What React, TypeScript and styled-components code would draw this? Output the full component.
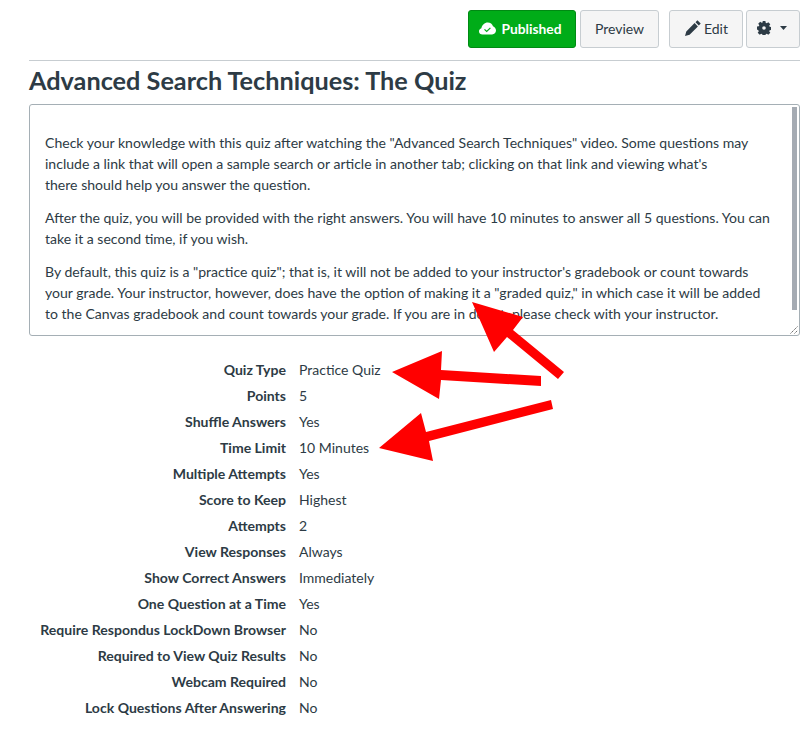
import React from 'react'
import styled, { createGlobalStyle } from 'styled-components'

const GlobalStyle = createGlobalStyle`
  html, body {
    margin: 0;
    padding: 0;
    background: #ffffff;
    font-family: Lato, "Liberation Sans", sans-serif;
    color: #2d3b45;
  }
`

const Page = styled.div`
  position: relative;
  width: 811px;
  height: 730px;
  overflow: hidden;
  box-sizing: border-box;
  padding: 10px 11px 0 29px;
`

const Toolbar = styled.div`
  display: flex;
  justify-content: flex-end;
  height: 38px;
  gap: 4px;
`

const Button = styled.div<{ $width: number; $spaced?: boolean }>`
  box-sizing: border-box;
  width: ${(p) => p.$width}px;
  margin-left: ${(p) => (p.$spaced ? 6 : 0)}px;
  padding-bottom: 2px;
  display: flex;
  align-items: center;
  justify-content: center;
  gap: 3px;
  border: 1px solid #c7cdd1;
  border-radius: 3px;
  background: #f5f5f5;
  color: #2d3b45;
  font-size: 14px;
`

const PublishedButton = styled(Button)`
  background: #00ac18;
  border-color: #008a13;
  color: #ffffff;
  font-weight: 700;
  font-size: 13.8px;
  gap: 5px;
  padding-right: 3px;
`

const EditButton = styled(Button)`
  padding-left: 1px;
`

const GearButton = styled(Button)`
  margin-left: -1px;
  gap: 9px;
  padding-right: 2px;
`

const Divider = styled.div`
  height: 1px;
  margin-top: 12px;
  background: #c7cdd1;
`

const Title = styled.h1`
  margin: 0;
  height: 43px;
  font-size: 25.25px;
  line-height: 39px;
  font-weight: 700;
  color: #2d3b45;
`

const DescriptionBox = styled.div`
  position: relative;
  box-sizing: border-box;
  height: 232px;
  padding: 27px 15px 0 15px;
  border: 1px solid #a5afb5;
  border-radius: 3px;
  overflow: hidden;
`

const Paragraph = styled.p`
  margin: 0 0 12px 0;
  font-size: 14.05px;
  line-height: 21px;
`

const ScrollThumb = styled.div`
  position: absolute;
  top: 2px;
  right: 2px;
  width: 5px;
  height: 203px;
  background: #a5abb3;
`

const ResizeHandle = styled.svg`
  position: absolute;
  right: 1px;
  bottom: 1px;
  width: 8px;
  height: 8px;
`

const Details = styled.div`
  display: grid;
  grid-template-columns: 257px 1fr;
  column-gap: 13px;
  margin-top: 21px;
`

const DetailLabel = styled.div`
  text-align: right;
  font-size: 14.05px;
  line-height: 26px;
  font-weight: 700;
`

const DetailValue = styled.div`
  font-size: 14px;
  line-height: 26px;
`

const ArrowLayer = styled.svg`
  position: absolute;
  top: 0;
  left: 0;
  width: 811px;
  height: 730px;
  pointer-events: none;
`

const details: [string, string][] = [
  ['Quiz Type', 'Practice Quiz'],
  ['Points', '5'],
  ['Shuffle Answers', 'Yes'],
  ['Time Limit', '10 Minutes'],
  ['Multiple Attempts', 'Yes'],
  ['Score to Keep', 'Highest'],
  ['Attempts', '2'],
  ['View Responses', 'Always'],
  ['Show Correct Answers', 'Immediately'],
  ['One Question at a Time', 'Yes'],
  ['Require Respondus LockDown Browser', 'No'],
  ['Required to View Quiz Results', 'No'],
  ['Webcam Required', 'No'],
  ['Lock Questions After Answering', 'No'],
]

const arrows = [
  '472,302 523,317 513,330 564,372 558,379 507,337 494,352',
  '392,372 442,351 441,370 541,376 541,386 441,380 439,399',
  '379,448 421,413 426,432 551,400 553,409 429,441 433,461',
]

const CloudCheck = () => (
  <svg width="17" height="13" viewBox="0 0 17 13">
    <path
      d="M3.500 12.500C1.500 12.500 0 11.200 0 9.400c0-1.500.9-2.700 2.400-3.100C3 3 5.600.5 8.800.5c2.600 0 4.500 1.500 5.200 3.800C15.800 5 17 6.700 17 8.600c0 2.300-1.700 3.900-3.900 3.900z"
      fill="#ffffff"
    />
    <path d="M5.500 7.300l2.200 2.200 3.700-3.700" fill="none" stroke="#00ac18" strokeWidth="1.200" />
  </svg>
)

const PencilIcon = () => (
  <svg width="16" height="16" viewBox="0 0 16 16">
    <path d="M12.400.300l3.300 3.300-1.900 1.900-3.300-3.300zM9.600 3.100l3.300 3.300-8.300 8.300L0 16l1.300-4.600z" fill="#2d3b45" />
  </svg>
)

const GearIcon = () => (
  <svg width="14" height="14" viewBox="0 0 14 14">
    <path
      fillRule="evenodd"
      d="M5.600 0h2.800l.3 1.800 1.100.5 1.500-1.100 2 2-1.100 1.500.5 1.100 1.800.3v2.800l-1.800.3-.5 1.100 1.100 1.500-2 2-1.500-1.100-1.100.5-.3 1.800H5.600l-.3-1.800-1.100-.5-1.500 1.100-2-2 1.100-1.500-.5-1.100L0 8.400V5.600l1.800-.3.500-1.100-1.100-1.500 2-2 1.500 1.100 1.100-.5zM7 5.200a1.800 1.800 0 1 0 0 3.600 1.800 1.800 0 0 0 0-3.600z"
      fill="#2d3b45"
    />
  </svg>
)

const Caret = () => (
  <svg width="7" height="4" viewBox="0 0 7 4">
    <path d="M0 0h7L3.500 4z" fill="#2d3b45" />
  </svg>
)

const App = () => (
  <Page>
    <GlobalStyle />
    <Toolbar>
      <PublishedButton $width={108}>
        <CloudCheck />
        Published
      </PublishedButton>
      <Button $width={79}>Preview</Button>
      <EditButton $width={74} $spaced>
        <PencilIcon />
        Edit
      </EditButton>
      <GearButton $width={54}>
        <GearIcon />
        <Caret />
      </GearButton>
    </Toolbar>
    <Divider />
    <Title>Advanced Search Techniques: The Quiz</Title>
    <DescriptionBox>
      <Paragraph>
        Check your knowledge with this quiz after watching the "Advanced Search Techniques" video. Some questions may
        <br />
        include a link that will open a sample search or article in another tab; clicking on that link and viewing what's
        <br />
        there should help you answer the question.
      </Paragraph>
      <Paragraph>
        After the quiz, you will be provided with the right answers. You will have 10 minutes to answer all 5 questions. You can
        <br />
        take it a second time, if you wish.
      </Paragraph>
      <Paragraph>
        By default, this quiz is a "practice quiz"; that is, it will not be added to your instructor's gradebook or count towards
        <br />
        your grade. Your instructor, however, does have the option of making it a "graded quiz," in which case it will be added
        <br />
        to the Canvas gradebook and count towards your grade. If you are in doubt, please check with your instructor.
      </Paragraph>
      <ScrollThumb />
      <ResizeHandle viewBox="0 0 8 8">
        <path d="M0.500 7.500L7.500 0.500M4.500 7.500L7.500 4.500" stroke="#666666" strokeWidth="1" strokeDasharray="1.500 0.700" fill="none" />
      </ResizeHandle>
    </DescriptionBox>
    <Details>
      {details.map(([label, value]) => (
        <React.Fragment key={label}>
          <DetailLabel>{label}</DetailLabel>
          <DetailValue>{value}</DetailValue>
        </React.Fragment>
      ))}
    </Details>
    <ArrowLayer viewBox="0 0 811 730">
      {arrows.map((points) => (
        <polygon key={points} points={points} fill="#ff0000" />
      ))}
    </ArrowLayer>
  </Page>
)

export default App
